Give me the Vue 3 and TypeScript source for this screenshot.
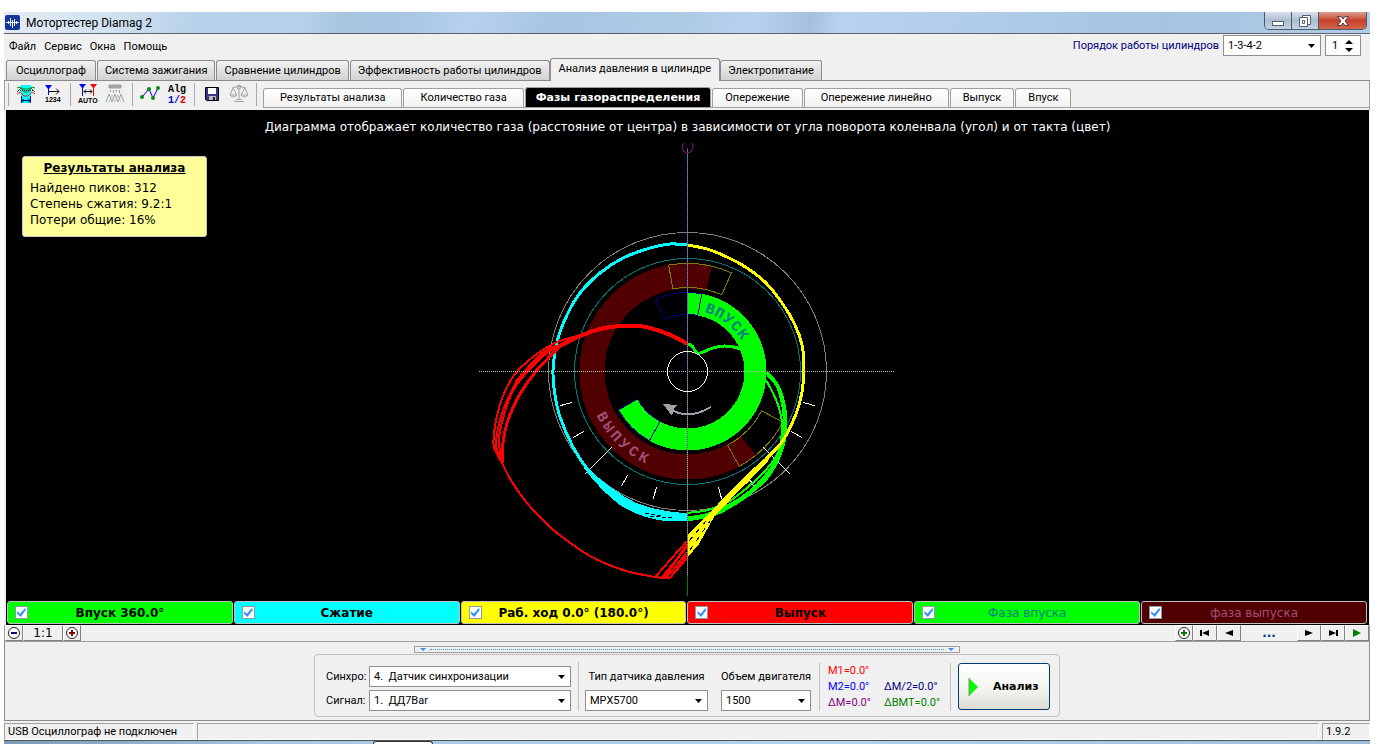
<script setup lang="ts">
import { ref } from 'vue'

interface Tab { label: string; active?: boolean; wide?: boolean }
interface Stroke { label: string; kind: string; checked: boolean }
interface Letter { ch: string; angle: number }

const menu: string[] = ['Файл', 'Сервис', 'Окна', 'Помощь']
const mainTabs = ref<Tab[]>([
  { label: 'Осциллограф' },
  { label: 'Система зажигания' },
  { label: 'Сравнение цилиндров' },
  { label: 'Эффективность работы цилиндров' },
  { label: 'Анализ давления в цилиндре', active: true },
  { label: 'Электропитание' },
])
const subTabs = ref<Tab[]>([
  { label: 'Результаты анализа', wide: true },
  { label: 'Количество газа', wide: true },
  { label: 'Фазы газораспределения', active: true },
  { label: 'Опережение' },
  { label: 'Опережение линейно', wide: true },
  { label: 'Выпуск' },
  { label: 'Впуск' },
])
const strokes = ref<Stroke[]>([
  { label: 'Впуск 360.0°', kind: 'intake', checked: true },
  { label: 'Сжатие', kind: 'compression', checked: true },
  { label: 'Раб. ход 0.0° (180.0°)', kind: 'power', checked: true },
  { label: 'Выпуск', kind: 'exhaust', checked: true },
  { label: 'Фаза впуска', kind: 'intake-phase', checked: true },
  { label: 'фаза выпуска', kind: 'exhaust-phase', checked: true },
])

const cx = 687.5
const cy = 371.5

function point(radius: number, angle: number): string {
  const a = (angle * Math.PI) / 180
  return `${(cx + radius * Math.sin(a)).toFixed(1)} ${(cy - radius * Math.cos(a)).toFixed(1)}`
}
function sector(outer: number, inner: number, from: number, to: number): string {
  const large = to - from > 180 ? 1 : 0
  return `M${point(outer, from)} A${outer} ${outer} 0 ${large} 1 ${point(outer, to)} ` +
    `L${point(inner, to)} A${inner} ${inner} 0 ${large} 0 ${point(inner, from)} Z`
}
function ray(from: number, to: number, angle: number): string {
  return `M${point(from, angle)} L${point(to, angle)}`
}
// Catmull-Rom spline through a list of "x,y" samples
function smooth(samples: string): string {
  const p = samples.split(' ').map((s) => s.split(',').map(Number))
  let d = `M${p[0][0]} ${p[0][1]}`
  for (let i = 0; i < p.length - 1; i++) {
    const a = p[Math.max(i - 1, 0)]
    const b = p[i]
    const c = p[i + 1]
    const e = p[Math.min(i + 2, p.length - 1)]
    d += ` C${b[0] + (c[0] - a[0]) / 6} ${b[1] + (c[1] - a[1]) / 6} ${c[0] - (e[0] - b[0]) / 6} ${c[1] - (e[1] - b[1]) / 6} ${c[0]} ${c[1]}`
  }
  return d
}

interface Trace { color: string; width: number; d: string }
const traces: Trace[] = [
  { color: '#0ff', width: 3, d: smooth('687,245 670,244 650,248 623,258 600,273 580,293 567,315 557,342 553,370 555,395 560,417 573,447 588,470 607,489') },
  { color: '#0f0', width: 3, d: smooth('687,344 692,346 697,353 703,352 713,348 725,346 740,349 750,357') },
  { color: '#0f0', width: 3, d: smooth('766,372 777,384 783,400 786,421 783,446 770,474 753,491 733,505 713,515 687,520') },
  { color: '#0f0', width: 2, d: smooth('766,380 773,393 779,408 782,425 779,450 766,470 748,487 728,502 708,510 687,513') },
  { color: '#0f0', width: 3, d: smooth('768,375 778,388 784,416 782,448 767,474 748,493 724,508 705,515 687,518') },
  { color: '#ff0', width: 3, d: smooth('687,245 707,249 727,257 747,268 766,283 782,303 795,325 802,345 804,368 802,392 796,414 782,442 767,458 747,481 722,503') },
  { color: '#f00', width: 4, d: smooth('687,344 677,338 660,331 640,326 620,326 600,329 580,336 556,348') },
  { color: '#f00', width: 2, d: smooth('580,335 555,343 533,357 515,374 503,396 496,420 494,435 494,447 502,463') },
  { color: '#f00', width: 2, d: smooth('580,337 554,348 532,367 514,389 504,415 499,440 502,463') },
  { color: '#f00', width: 2, d: smooth('560,345 537,359 520,377 508,398 500,420 496,445 502,463') },
  { color: '#f00', width: 3, d: smooth('560,346 537,370 520,394 508,420 503,443 502,463') },
  { color: '#f00', width: 3, d: smooth('556,346 543,353 530,366 516,382') },
  { color: '#f00', width: 2, d: smooth('502,463 512,482 527,503 542,519 557,533 590,556 623,570 655,577 670,578') },
]

const ticks: string[] = [105, 120, 150, 165, 195, 210, 240, 255]
  .map((a) => ray(120, 132, a))
  .concat([ray(107, 145, 135), ray(107, 145, 225)])

const intakeLetters: Letter[] = [...'ВПУСК'].map((ch, i) => ({ ch, angle: 20 + i * 9 }))
const exhaustLetters: Letter[] = [...'ВЫПУСК'].map((ch, i) => ({ ch, angle: 62 - i * 7 }))
</script>

<template>
  <div class="desktop">
    <main class="window">
      <header class="titlebar">
        <svg class="logo" viewBox="0 0 15 15" aria-hidden="true">
          <rect width="15" height="15" rx="2" fill="#16349a" />
          <path d="M1 7.500h13M3.500 6v3M5.500 3v8M7.500 5v8M9.500 4v7M11.500 6v3" fill="none" stroke="#e4f4ff" />
        </svg>
        <h1>Мотортестер Diamag 2</h1>
        <div class="winbuttons">
          <button type="button" aria-label="Свернуть">
            <svg width="14" height="14" viewBox="0 0 14 14"><rect x="1.500" y="7.500" width="11" height="4" fill="#fff" stroke="#555f70" /></svg>
          </button>
          <button type="button" aria-label="Развернуть">
            <svg width="14" height="14" viewBox="0 0 14 14" fill="#fff" stroke="#555f70"><path d="M4.500 1.500h8v9h-8z" /><path d="M1.500 3.500h8v9h-8z" /><path d="M4.500 6.500h2v3h-2z" /></svg>
          </button>
          <button type="button" class="close" aria-label="Закрыть">
            <svg width="14" height="12" viewBox="0 0 14 12"><path d="M1.500 1.500h3.500l2 2.500 2-2.500h3.500l-3.500 4.500 3.500 4.500H9l-2-2.500-2 2.500H1.500L5 6z" fill="#fff" stroke="#5b3a3f" /></svg>
          </button>
        </div>
      </header>

      <div class="menurow">
        <nav class="menu"><button v-for="m in menu" :key="m" type="button">{{ m }}</button></nav>
        <div class="order">
          <label for="order">Порядок работы цилиндров</label>
          <span class="combo order-combo">
            <select id="order"><option>1-3-4-2</option></select>
            <svg width="7" height="4" viewBox="0 0 7 4"><path d="M0 0h7L3.500 4z" /></svg>
          </span>
          <span class="spin">
            <input type="text" value="1" aria-label="Номер цилиндра" />
            <span class="spin-arrows">
              <button type="button" aria-label="Больше"><svg width="8" height="4" viewBox="0 0 8 4"><path d="M0 4h8L4 0z" /></svg></button>
              <button type="button" aria-label="Меньше"><svg width="8" height="4" viewBox="0 0 8 4"><path d="M0 0h8L4 4z" /></svg></button>
            </span>
          </span>
        </div>
      </div>

      <nav class="maintabs">
        <button v-for="t in mainTabs" :key="t.label" type="button" :class="{ active: t.active }">{{ t.label }}</button>
      </nav>

      <div class="toolbar">
        <div class="tools">
          <i class="split"></i>
          <button type="button" aria-label="Диаграмма">
            <svg width="20" height="20" viewBox="0 0 20 20" fill="none">
              <rect x="5" y="1" width="10" height="18" fill="#0ff" />
              <path d="M1 4l3-1 3 2h6l3-2 3 1" stroke="#117a22" />
              <path d="M1 8l4-4 3 4h4l3-4 4 4" stroke="#117a22" />
              <path d="M2 6.500h16" stroke="#222" stroke-dasharray="1 1" />
              <path d="M1 10l3-2 4 4h4l4-4 3 2" stroke="#e02020" />
              <path d="M5.500 12v7M14.500 12v7M6 16.500h8M8 14.500l-2 2 2 2M12 14.500l2 2-2 2" stroke="#00127a" />
            </svg>
          </button>
          <button type="button" aria-label="Нумерация">
            <svg width="20" height="20" viewBox="0 0 20 20">
              <path d="M2 1h7L6 5v6H5V5z" fill="#00f" />
              <path d="M6 7.500h10M13 4.500l3 3-3 3" fill="none" stroke="#111" />
              <text x="2" y="18" class="glyph">1234</text>
            </svg>
          </button>
          <i class="split"></i>
          <button type="button" aria-label="Авто">
            <svg width="20" height="20" viewBox="0 0 20 20">
              <path d="M1 0h7L5 4v8H4V4z" fill="#00f" /><path d="M12 0h7l-3 4v8h-1V4z" fill="#f00" />
              <path d="M6 7.500h8M8 5.500l-2 2 2 2M12 5.500l2 2-2 2" fill="none" stroke="#111" />
              <text x="0" y="19" class="glyph">AUTO</text>
            </svg>
          </button>
          <button type="button" aria-label="Спектр">
            <svg width="20" height="20" viewBox="0 0 20 20" fill="none" stroke="#a2a2a2">
              <path d="M4 1h12v3H4z" fill="#a2a2a2" /><path d="M5.500 6v2M8.500 6v3M11.500 6v2M14.500 6v3" />
              <path d="M1 18l3-8 3 8 3-8 3 8 3-8 3 8" /><path d="M4 18l3-7 3 7 3-7 3 7" stroke-dasharray="1 1" />
            </svg>
          </button>
          <i class="split"></i>
          <button type="button" aria-label="График">
            <svg width="20" height="20" viewBox="0 0 20 20">
              <path d="M2 13L9 5l4 9 5-10" fill="none" stroke="#00f" />
              <g fill="#0a8a0a"><circle cx="2" cy="13" r="2" /><circle cx="9" cy="5" r="2" /><circle cx="13" cy="14" r="2" /><circle cx="18" cy="4" r="2" /></g>
            </svg>
          </button>
          <button type="button" aria-label="Алгоритм">
            <svg width="20" height="20" viewBox="0 0 20 20">
              <text x="1" y="8" class="alg">Alg</text>
              <text x="1" y="19" class="alg blue">1/<tspan class="red">2</tspan></text>
            </svg>
          </button>
          <i class="split"></i>
          <button type="button" aria-label="Сохранить">
            <svg width="20" height="20" viewBox="-2 -2 20 20">
              <path d="M1.500 1.500h13v13h-12l-1-1z" fill="#3a3a8c" stroke="#000" /><path d="M4 2h8v6H4z" fill="#fff" /><path d="M5 10h7v4H5z" fill="#bbb" /><path d="M9 11h2v3H9z" fill="#222" />
            </svg>
          </button>
          <button type="button" aria-label="Сравнить">
            <svg width="20" height="20" viewBox="0 0 20 20" fill="none" stroke="#a2a2a2">
              <path d="M10 1v14M3 4l7-2 7 2M5 17.500h10M7 15.500h6" /><circle cx="10" cy="3" r="2" />
              <path d="M4 4L1 11h7zM16 4l-4 7h7zM1 11q3 4 7 0M12 11q3 4 7 0" />
            </svg>
          </button>
          <i class="split"></i>
        </div>
        <nav class="subtabs">
          <button v-for="t in subTabs" :key="t.label" type="button" :class="{ active: t.active, wide: t.wide }">{{ t.label }}</button>
        </nav>
      </div>

      <section class="stage">
        <p class="caption">Диаграмма отображает количество газа (расстояние от центра) в зависимости от угла поворота коленвала (угол) и от такта (цвет)</p>
        <aside class="results">
          <h2>Результаты анализа</h2>
          <p>Найдено пиков: 312</p>
          <p>Степень сжатия: 9.2:1</p>
          <p>Потери общие: 16%</p>
        </aside>
        <svg class="diagram" width="417" height="457" viewBox="479 141 417 457" fill="none" shape-rendering="crispEdges">
          <path :d="sector(108, 83, 140.7, 373)" fill="#500000" />
          <path :d="sector(79, 57, 0, 241)" fill="#0f0" />
          <circle :cx="cx" :cy="cy" r="139" stroke="#808080" />
          <circle :cx="cx" :cy="cy" r="113" stroke="#007878" />
          <g stroke="#808000">
            <path :d="sector(108, 84, -10, 24)" />
            <path :d="sector(108, 84, 118, 151.4)" />
          </g>
          <g stroke="#000080">
            <path :d="sector(79, 57, -23.8, 10.4)" />
            <path :d="sector(79, 57, 208.8, 241)" />
          </g>
          <g class="ring-text intake-letters">
            <text v-for="l in intakeLetters" :key="l.ch" :x="cx" :y="cy - 62" :transform="`rotate(${l.angle} ${cx} ${cy})`">{{ l.ch }}</text>
          </g>
          <g class="ring-text exhaust-letters">
            <text v-for="l in exhaustLetters" :key="l.ch" :x="cx" :y="cy + 101" :transform="`rotate(${l.angle} ${cx} ${cy})`">{{ l.ch }}</text>
          </g>
          <path v-for="t in ticks" :key="t" :d="t" stroke="#fff" />

          <path v-for="t in traces" :key="t.d" :d="t.d" :stroke="t.color" :stroke-width="t.width" stroke-linejoin="round" />
          <path fill="#0ff" d="M586 466Q610 490 636 503Q660 512 687 513V521H665Q640 518 620 505Q600 490 584 468z" />
          <path d="M645 513l16 3M650 516l22 2" stroke="#000" stroke-dasharray="4 2" />
          <path fill="#ff0" d="M772 452L747 474L718 504L687 536V558L699 544L715 515L731 499L768 461z" />
          <path d="M689 541l17-20M690 550l20-29" stroke="#000" stroke-dasharray="5 6" />
          <path d="M656 576L687 541M662 577L687 547M667 577L687 552M670 578L687 558M672 575L687 555M665 577L687 544" stroke="#f00" stroke-width="2" />

          <path d="M479 371.500H895" stroke="#c0c0c0" stroke-dasharray="1 1" />
          <path d="M687.500 148V576" stroke="#555" />
          <path d="M687.500 150V372" stroke="#8080ff" stroke-dasharray="1 1" />
          <path d="M687.500 372V576" stroke="#a0a0a0" stroke-dasharray="1 1" />
          <path d="M687.500 576V596" stroke="#008000" />
          <path d="M684 143A5.500 5.500 0 1 0 691 143" stroke="#800080" />
          <circle :cx="cx" :cy="cy" r="20" stroke="#fff" />
          <path d="M711 407Q689 420 672 410" stroke="#a0a0a8" stroke-width="2" />
          <path d="M663 404l14 1-3 4-2 7z" fill="#a0a0a8" />
        </svg>
      </section>

      <div class="legend">
        <label v-for="s in strokes" :key="s.label" :class="s.kind">
          <input v-model="s.checked" type="checkbox" />
          <span>{{ s.label }}</span>
        </label>
      </div>

      <div class="navstrip">
        <button type="button" class="round" aria-label="Уменьшить">
          <svg width="14" height="14" viewBox="0 0 14 14"><circle cx="7" cy="7" r="5.500" fill="#fff" stroke="#222" /><path d="M4 7h6" stroke="#00007a" stroke-width="2" /></svg>
        </button>
        <button type="button" class="scale">1:1</button>
        <button type="button" class="round" aria-label="Увеличить">
          <svg width="14" height="14" viewBox="0 0 14 14"><circle cx="7" cy="7" r="5.500" fill="#fff" stroke="#222" /><path d="M4 7h6M7 4v6" stroke="#8a0000" stroke-width="2" /></svg>
        </button>
        <span class="gap"></span>
        <button type="button" class="round" aria-label="Добавить">
          <svg width="14" height="14" viewBox="0 0 14 14"><circle cx="7" cy="7" r="5.500" fill="#fff" stroke="#222" /><path d="M4 7h6M7 4v6" stroke="#007a00" stroke-width="2" /></svg>
        </button>
        <button type="button" class="step" aria-label="В начало"><svg width="12" height="8" viewBox="0 0 12 8"><path d="M1 1h2v6H1zM3 4l7-3v6z" /></svg></button>
        <button type="button" class="step" aria-label="Назад"><svg width="12" height="8" viewBox="0 0 12 8"><path d="M2 4l8-3v6z" /></svg></button>
        <output>...</output>
        <button type="button" class="step" aria-label="Вперёд"><svg width="12" height="8" viewBox="0 0 12 8"><path d="M10 4L2 1v6z" /></svg></button>
        <button type="button" class="step" aria-label="В конец"><svg width="12" height="8" viewBox="0 0 12 8"><path d="M9 1h2v6H9zM9 4L2 1v6z" /></svg></button>
        <button type="button" class="step" aria-label="Пуск"><svg width="12" height="8" viewBox="0 0 12 8"><path d="M10 4L2 0v8z" fill="#008000" /></svg></button>
      </div>

      <section class="panel">
        <div class="handle"><i></i><b></b><i></i></div>
        <form class="group" @submit.prevent>
          <div class="signals">
            <label for="sync">Синхро:</label>
            <span class="combo">
              <select id="sync"><option>4.&nbsp; Датчик синхронизации</option></select>
              <svg width="7" height="4" viewBox="0 0 7 4"><path d="M0 0h7L3.500 4z" /></svg>
            </span>
            <label for="signal">Сигнал:</label>
            <span class="combo">
              <select id="signal"><option>1.&nbsp; ДД7Bar</option></select>
              <svg width="7" height="4" viewBox="0 0 7 4"><path d="M0 0h7L3.500 4z" /></svg>
            </span>
          </div>
          <div class="field sensor">
            <label for="sensor">Тип датчика давления</label>
            <span class="combo">
              <select id="sensor"><option>MPX5700</option></select>
              <svg width="7" height="4" viewBox="0 0 7 4"><path d="M0 0h7L3.500 4z" /></svg>
            </span>
          </div>
          <div class="field volume">
            <label for="volume">Объем двигателя</label>
            <span class="combo">
              <select id="volume"><option>1500</option></select>
              <svg width="7" height="4" viewBox="0 0 7 4"><path d="M0 0h7L3.500 4z" /></svg>
            </span>
          </div>
          <div class="markers">
            <span class="m1">M1=0.0°</span><span></span>
            <span class="m2">M2=0.0°</span><span class="half">∆M/2=0.0°</span>
            <span class="dm">∆M=0.0°</span><span class="bmt">∆BMT=0.0°</span>
          </div>
          <button type="submit" class="analyze">
            <svg width="11" height="20" viewBox="0 0 11 20"><path d="M1 1v18l9-9z" fill="#0f0" /><path d="M1 1v18" stroke="#888" /></svg>
            <span>Анализ</span>
          </button>
        </form>
      </section>

      <footer class="status">
        <span class="device">USB Осциллограф не подключен</span>
        <span class="message"></span>
        <span class="version">1.9.2</span>
      </footer>
      <div class="taskbar"><i></i></div>
    </main>
  </div>
</template>

<style>
html, body { background: #fff; }
</style>

<style scoped>
* { box-sizing: border-box; }
.desktop {
  min-height: 100vh;
  display: flex;
  padding: 12px 12px 0 4px;
  background: #fff;
  font: 11px/14px Roboto, "Liberation Sans", sans-serif;
  color: #000;
}
.window {
  flex: 1;
  min-width: 0;
  display: flex;
  flex-direction: column;
  background: #f0f0f0;
}
button, select, input { font: inherit; color: inherit; margin: 0; }
button { border: 0; padding: 0; background: none; }
h1, h2, p { margin: 0; }

.titlebar {
  display: flex;
  align-items: center;
  height: 22px;
  border-bottom: 1px solid #5c6370;
  background: linear-gradient(100deg, #e3ecf5 0, #d0e1f0 8%, #b8d2eb 14%, #b4d0eb 22%, #a7c4df 25%, #aac8e3 30%, #b5d1ed 34%, #a8c5e1 40%, #aecbe6 50%, #b7d2ee 55%, #a5bfdc 59%, #b7d3ef 61%, #acc9e5 76%, #a5c4df 85%, #b2cde8 100%);
}
.logo { width: 15px; height: 15px; margin: 0 6px 0 1px; }
h1 { font: 12px/20px Roboto, sans-serif; }
.winbuttons {
  margin-left: auto;
  margin-right: 3px;
  align-self: flex-start;
  display: flex;
  border: 1px solid #4d5a6b;
  border-top: 0;
  border-radius: 0 0 5px 5px;
  overflow: hidden;
}
.winbuttons button {
  display: flex;
  align-items: center;
  justify-content: center;
  width: 27px;
  height: 17px;
  background: linear-gradient(#d8e2ec, #a9bccf 50%, #c4d4e4);
  border-right: 1px solid #4d5a6b;
}
.winbuttons .close { width: 47px; border-right: 0; background: linear-gradient(#dfa093, #c5402c 50%, #d3664e); }

.menurow { display: flex; justify-content: space-between; height: 24px; padding: 0 9px 0 5px; }
.menu { display: flex; align-items: center; gap: 8px; padding-top: 2px; }
.order { display: flex; align-items: center; gap: 4px; height: 23px; }
.order label { color: #000080; }
.combo { position: relative; display: block; }
.combo select {
  appearance: none;
  display: block;
  width: 100%;
  height: 21px;
  padding: 0 18px 0 4px;
  border: 1px solid #8f8f8f;
  border-radius: 0;
  background: #fff;
}
.combo svg { position: absolute; right: 6px; top: 9px; pointer-events: none; }
.order-combo { width: 98px; }
.spin { display: flex; width: 36px; height: 21px; border: 1px solid #8f8f8f; background: #fff; }
.spin input { width: 19px; border: 0; padding: 0 0 0 6px; background: none; }
.spin-arrows { display: flex; flex-direction: column; justify-content: center; gap: 4px; }
.spin-arrows button { display: flex; }

.maintabs {
  display: flex;
  align-items: flex-end;
  height: 23px;
  padding-left: 2px;
  border-bottom: 1px solid #8c8c8c;
}
.maintabs button {
  height: 20px;
  padding: 0 7px;
  margin-right: 1px;
  border: 1px solid #8c8c8c;
  border-bottom: 0;
  border-radius: 3px 3px 0 0;
  background: linear-gradient(#f2f2f2, #d2d2d2);
  white-space: nowrap;
}
.maintabs button:first-child { padding: 0 9px; }
.maintabs .active { height: 23px; margin: 0 0 -1px -1px; padding: 0 8px 2px; background: #f0f0f0; }

.toolbar {
  display: flex;
  justify-content: flex-start;
  height: 29px;
  border: 1px solid #a0a0a0;
  border-width: 0 1px 0 1px;
}
.tools { display: flex; align-items: center; gap: 7px; padding-left: 3px; width: 258px; height: 26px; }
.tools button { display: flex; flex: none; }
.tools svg { overflow: visible; }
.split { width: 1px; height: 23px; background: #a8a8a8; }
.glyph { font: bold 7px "Liberation Sans", sans-serif; }
.alg { font: bold 10px "Liberation Mono", monospace; }
.blue { fill: #0000d0; }
.red { fill: #e00000; }
.subtabs { flex: 1; display: flex; align-items: flex-end; height: 27px; border-bottom: 1px solid #a0a0a0; }
.subtabs button {
  height: 19px;
  padding: 0 12px;
  margin-right: 1px;
  border: 1px solid #a0a0a0;
  border-bottom: 0;
  border-radius: 3px 3px 0 0;
  background: linear-gradient(#fff, #f2f2f2);
  white-space: nowrap;
}
.subtabs .wide { padding: 0 16px; }
.subtabs .active {
  height: 20px;
  padding: 0 10px;
  background: #000;
  color: #fff;
  font: bold 11px/14px "DejaVu Sans", sans-serif;
}

.stage {
  position: relative;
  flex: 1;
  display: flex;
  flex-direction: column;
  align-items: center;
  margin: 0 1px 0 2px;
  background: #000;
  color: #fff;
  font: 12px/16px "DejaVu Sans", sans-serif;
}
.caption { padding: 9px 0 6px; text-align: center; }
.diagram { display: block; }
.results {
  position: absolute;
  left: 16px;
  top: 46px;
  width: 185px;
  height: 81px;
  padding: 3px 7px;
  border: 1px solid #c8c8c8;
  border-radius: 3px;
  background: #ffff99;
  color: #000;
}
.results h2 { font: bold 12px/16px "DejaVu Sans", sans-serif; text-align: center; text-decoration: underline; margin-bottom: 4px; }
.ring-text { font: bold 15px "Liberation Mono", monospace; text-anchor: middle; }
.intake-letters { fill: #008080; }
.exhaust-letters { fill: #a05078; }

.legend {
  display: grid;
  grid-template-columns: repeat(6, 1fr);
  gap: 1px;
  margin: 0 1px 0 2px;
  padding: 3px 2px 1px 1px;
  background: #000;
  font: bold 12px/20px "DejaVu Sans", sans-serif;
}
.legend label { display: grid; align-items: center; height: 23px; border: 1px solid #c0c0c0; border-radius: 3px; }
.legend input {
  grid-area: 1 / 1;
  appearance: none;
  width: 13px;
  height: 13px;
  margin-left: 7px;
  border: 1px solid #8e9aa8;
  background: #fff;
}
.legend input:checked::before {
  content: "";
  display: block;
  width: 9px;
  height: 9px;
  margin: 1px;
  background: #2f8fff;
  clip-path: polygon(0 35%, 35% 65%, 90% 0, 100% 20%, 40% 100%, 0 60%);
}
.legend span { grid-area: 1 / 1; text-align: center; pointer-events: none; }
.intake, .intake-phase { background: #0f0; }
.compression { background: #0ff; }
.power { background: #ff0; }
.exhaust { background: #f00; }
.exhaust-phase { background: #500000; color: #a05078; font-weight: normal; }
.intake-phase { color: #008080; font-weight: normal; }

.navstrip {
  display: flex;
  height: 17px;
  border: 1px solid #a0a0a0;
  border-top: 0;
  font: 12px/16px "DejaVu Sans", sans-serif;
}
.navstrip button { display: flex; align-items: center; justify-content: center; border: 1px solid #fff; border-right-color: #808080; border-bottom-color: #808080; }
.navstrip .round { width: 18px; }
.scale { width: 40px; }
.step { width: 24px; }
.gap { flex: 1; }
output { width: 56px; text-align: center; color: #003a80; font-weight: bold; }

.panel {
  display: flex;
  flex-direction: column;
  align-items: center;
  height: 79px;
  padding-top: 4px;
  border: 1px solid #8c8c8c;
  border-top: 0;
}
.handle { display: flex; align-items: center; gap: 4px; width: 546px; height: 7px; padding: 0 5px; border: 1px solid #a0a0a0; }
.handle i { border: 3px solid transparent; border-top: 3px solid #2f8fff; border-bottom: 0; }
.handle b { flex: 1; border-top: 1px dotted #2f8fff; }
.group {
  display: flex;
  align-items: center;
  width: 746px;
  height: 63px;
  margin-top: 1px;
  padding: 2px 9px 0 11px;
  border: 1px solid #c0c0c0;
  border-radius: 4px;
}
.signals {
  display: grid;
  grid-template-columns: 39px 202px;
  gap: 3px 4px;
  align-items: center;
  padding: 4px 7px 0 0;
  border-right: 1px solid #c0c0c0;
}
.field { display: flex; flex-direction: column; gap: 3px; padding: 4px 0 0 6px; text-align: center; }
.field label { line-height: 21px; white-space: nowrap; }
.signals label { white-space: nowrap; }
.sensor { width: 129px; }
.volume { width: 103px; padding-left: 13px; }
.markers {
  display: grid;
  grid-template-columns: 56px 66px;
  line-height: 16px;
  margin-left: 8px;
  padding-left: 8px;
  border-left: 1px solid #c0c0c0;
  border-right: 1px solid #c0c0c0;
}
.markers span { min-height: 16px; }
.m1 { color: #f00; }
.m2 { color: #00f; }
.dm { color: #800080; }
.half { color: #000080; }
.bmt { color: #008000; }
.analyze {
  display: flex;
  align-items: center;
  gap: 14px;
  width: 92px;
  height: 47px;
  margin-left: auto;
  border: 1px solid #003c74;
  border-radius: 3px;
  background: linear-gradient(#fff, #f3f3ee 60%, #dcdcd4);
}
button.analyze { padding: 0 9px; font: bold 11px/14px "DejaVu Sans", sans-serif; }

.status { display: flex; gap: 3px; height: 19px; padding-top: 2px; line-height: 15px; }
.status span { padding: 0 3px; border: 1px solid #a0a0a0; border-right-color: #fff; border-bottom-color: #fff; }
.device { width: 190px; white-space: nowrap; }
.message { flex: 1; }
.version { width: 48px; }
.taskbar { height: 4px; border-top: 1px solid #4a5560; background: linear-gradient(90deg, #7d9ab8, #a8c6e4 20%, #b5d0ec 60%, #9dbcdc); }
.taskbar i { display: block; width: 60px; height: 3px; margin-left: 369px; border: 1px solid #333; border-bottom: 0; border-radius: 3px 3px 0 0; background: #fff; }
</style>
